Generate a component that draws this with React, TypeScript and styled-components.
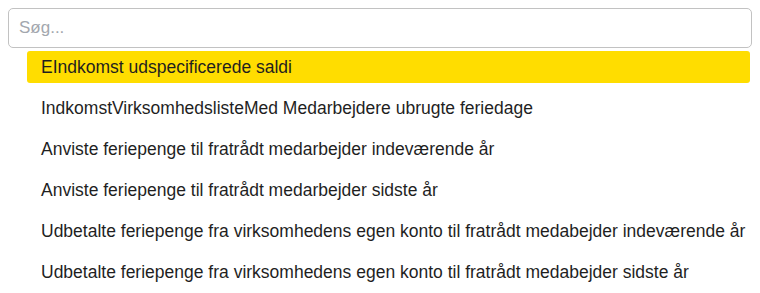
import styled, { createGlobalStyle } from "styled-components";

const GlobalStyle = createGlobalStyle`
  body {
    margin: 0;
    background: #ffffff;
    font-family: "Liberation Sans", Arial, sans-serif;
  }
`;

const Panel = styled.div`
  padding: 8px 8px 0 8px;
`;

const SearchInput = styled.input`
  display: block;
  box-sizing: border-box;
  width: 100%;
  height: 40px;
  padding: 0 10px;
  border: 1px solid #c2c2c2;
  border-radius: 5px;
  font-family: inherit;
  font-size: 17px;
  color: #222;
  outline: none;

  &::placeholder {
    color: #a3a7ae;
  }
`;

const List = styled.ul`
  list-style: none;
  margin: 3px 2px 0 19px;
  padding: 0;
`;

const Item = styled.li<{ $active?: boolean }>`
  height: 32px;
  margin-bottom: 9px;
  padding: 0 14px;
  display: flex;
  align-items: center;
  border-radius: 3px;
  font-size: 17.5px;
  color: #1f1f1f;
  white-space: nowrap;
  background: ${(p) => (p.$active ? "#ffdd00" : "transparent")};
`;

const items = [
  "EIndkomst udspecificerede saldi",
  "IndkomstVirksomhedslisteMed Medarbejdere ubrugte feriedage",
  "Anviste feriepenge til fratrådt medarbejder indeværende år",
  "Anviste feriepenge til fratrådt medarbejder sidste år",
  "Udbetalte feriepenge fra virksomhedens egen konto til fratrådt medabejder indeværende år",
  "Udbetalte feriepenge fra virksomhedens egen konto til fratrådt medabejder sidste år",
];

export default function App() {
  return (
    <>
      <GlobalStyle />
      <Panel>
        <SearchInput placeholder="Søg..." />
        <List>
          {items.map((text, i) => (
            <Item key={text} $active={i === 0}>
              {text}
            </Item>
          ))}
        </List>
      </Panel>
    </>
  );
}
